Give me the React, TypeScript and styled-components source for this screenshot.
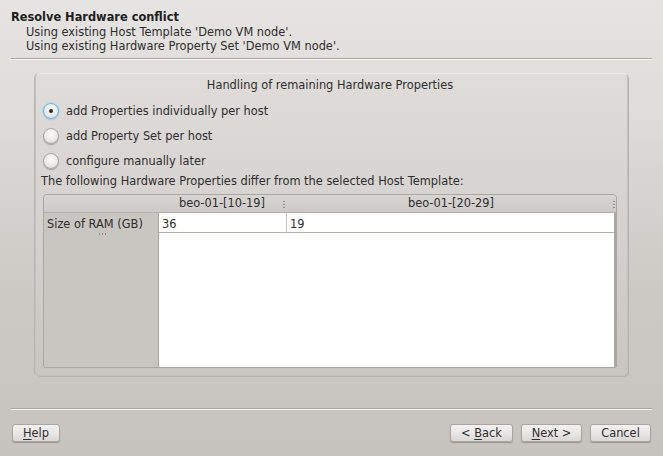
import React from 'react';
import styled, { createGlobalStyle } from 'styled-components';

const GlobalStyle = createGlobalStyle`
  html, body {
    margin: 0;
    padding: 0;
  }
  body {
    font-family: "DejaVu Sans", "Liberation Sans", sans-serif;
    font-size: 11.4px;
    color: #2e2e2e;
  }
`;

const Window = styled.div`
  width: 663px;
  height: 456px;
  box-sizing: border-box;
  display: flex;
  flex-direction: column;
  background: linear-gradient(180deg, #e6e4e2 0px, #dedbd8 120px, #ccc8c4 300px, #c7c3bf 456px);
  overflow: hidden;
`;

const Header = styled.div`
  padding: 10px 11px 0 11px;
`;

const HeaderTitle = styled.div`
  font-weight: bold;
  line-height: 14px;
  height: 15px;
  color: #1e1e1e;
`;

const HeaderLine = styled.div`
  padding-left: 15px;
  line-height: 14px;
`;

const Separator = styled.div<{ $top: number }>`
  margin: ${p => p.$top}px 11px 0 11px;
  height: 1px;
  background: #a9a5a1;
  border-bottom: 1px solid #f6f5f4;
`;

const GroupBox = styled.div`
  margin: 13px 35px 0 35px;
  height: 303px;
  box-sizing: border-box;
  border: 1px solid #c4c0bc;
  border-top-color: #ecebea;
  border-radius: 5px;
  background: linear-gradient(180deg, #dfdcda 0%, #d3cfcc 60%, #c9c5c1 100%);
  box-shadow: 1px 1px 0 #b5b1ad, -1px 0 0 #b9b5b1;
  padding: 4px 10px 0 7px;
  display: flex;
  flex-direction: column;
`;

const GroupTitle = styled.div`
  text-align: center;
  line-height: 14px;
  height: 14px;
  margin-bottom: 6px;
`;

const RadioRow = styled.label`
  display: flex;
  align-items: center;
  gap: 7px;
  height: 25px;
  padding-left: 0;
`;

const RadioCircle = styled.span<{ $checked?: boolean }>`
  width: 16px;
  height: 16px;
  border-radius: 50%;
  box-sizing: border-box;
  border: 1px solid ${p => (p.$checked ? '#6ab7e4' : '#aaa6a2')};
  background: radial-gradient(circle at 50% 35%, #fbfbfa 0%, #ebe9e7 55%, #d8d5d2 100%);
  box-shadow: ${p => (p.$checked ? '0 0 0 1px #a9d9f5, 0 1px 1px rgba(0,0,0,0.25)' : '0 1px 1px rgba(0,0,0,0.25)')};
  display: flex;
  align-items: center;
  justify-content: center;
  &::after {
    content: '';
    width: 4px;
    height: 4px;
    border-radius: 50%;
    background: ${p => (p.$checked ? '#2a2a2a' : 'transparent')};
  }
`;

const InfoText = styled.div`
  line-height: 14px;
  margin: 1px 0 6px -2px;
`;

const Table = styled.div`
  height: 174px;
  box-sizing: border-box;
  border: 1px solid #aaa6a2;
  border-radius: 4px 4px 2px 2px;
  display: grid;
  grid-template-columns: 114px 128px 1fr;
  grid-template-rows: 18px 20px 1fr;
  overflow: hidden;
  background: #c9c5c1;
`;

const HeaderCell = styled.div<{ $handle?: boolean }>`
  position: relative;
  background: linear-gradient(180deg, #d8d5d2, #cdc9c6);
  border-bottom: 1px solid #b3afab;
  line-height: 17px;
  text-align: center;
  color: #2e2e2e;
  &::after {
    content: ${p => (p.$handle ? "''" : 'none')};
    position: absolute;
    right: 1px;
    top: 5px;
    width: 2px;
    height: 8px;
    background: radial-gradient(circle, #8e8a86 0.8px, transparent 1px) 0 0 / 2px 3px repeat-y;
  }
`;

const RowHeader = styled.div`
  position: relative;
  padding: 4px 0 0 3px;
  line-height: 14px;
  &::after {
    content: '';
    position: absolute;
    left: 54px;
    top: 20px;
    width: 8px;
    height: 2px;
    background: radial-gradient(circle, #8e8a86 0.7px, transparent 1px) 0 0 / 3px 2px repeat-x;
  }
`;

const Cell = styled.div<{ $last?: boolean }>`
  background: #ffffff;
  border-left: 1px solid ${p => (p.$last ? '#c4c0bc' : '#a9a5a1')};
  border-bottom: 1px solid #b3afab;
  border-right: ${p => (p.$last ? '2px solid #aaa6a2' : 'none')};
  padding: 4px 0 0 3px;
  line-height: 14px;
`;

const RowHeaderFill = styled.div`
  background: #c9c5c1;
`;

const EmptyArea = styled.div`
  grid-column: 2 / 4;
  background: #ffffff;
  border-left: 1px solid #a9a5a1;
  border-right: 2px solid #aaa6a2;
`;

const Spacer = styled.div`
  flex: 1;
`;

const Footer = styled.div`
  display: flex;
  align-items: center;
  padding: 14px 12px 14px 12px;
  gap: 8px;
`;

const Button = styled.button<{ $width: number }>`
  width: ${p => p.$width}px;
  height: 18px;
  box-sizing: border-box;
  padding: 0;
  font-family: "DejaVu Sans", "Liberation Sans", sans-serif;
  font-size: 11.4px;
  color: #2e2e2e;
  border: 1px solid #aaa5a1;
  border-radius: 3px;
  background: linear-gradient(180deg, #f3f2f1 0%, #e6e4e2 60%, #dad7d4 100%);
  box-shadow: 0 1px 1px rgba(0, 0, 0, 0.25);
  line-height: 16px;
`;

const Mnemonic = styled.span`
  text-decoration: underline;
  text-underline-offset: 2px;
`;

const FooterGap = styled.div`
  flex: 1;
`;

const App = () => {
  return (
    <>
      <GlobalStyle />
      <Window>
        <Header>
          <HeaderTitle>Resolve Hardware conflict</HeaderTitle>
          <HeaderLine>Using existing Host Template 'Demo VM node'.</HeaderLine>
          <HeaderLine>Using existing Hardware Property Set 'Demo VM node'.</HeaderLine>
        </Header>
        <Separator $top={5} />

        <GroupBox>
          <GroupTitle>Handling of remaining Hardware Properties</GroupTitle>
          <RadioRow>
            <RadioCircle $checked />
            add Properties individually per host
          </RadioRow>
          <RadioRow>
            <RadioCircle />
            add Property Set per host
          </RadioRow>
          <RadioRow>
            <RadioCircle />
            configure manually later
          </RadioRow>
          <InfoText>The following Hardware Properties differ from the selected Host Template:</InfoText>
          <Table>
            <HeaderCell />
            <HeaderCell $handle>beo-01-[10-19]</HeaderCell>
            <HeaderCell $handle>beo-01-[20-29]</HeaderCell>
            <RowHeader>Size of RAM (GB)</RowHeader>
            <Cell>36</Cell>
            <Cell $last>19</Cell>
            <RowHeaderFill />
            <EmptyArea />
          </Table>
        </GroupBox>

        <Spacer />
        <Separator $top={0} />
        <Footer>
          <Button $width={48}>
            <Mnemonic>H</Mnemonic>elp
          </Button>
          <FooterGap />
          <Button $width={63}>
            &lt; <Mnemonic>B</Mnemonic>ack
          </Button>
          <Button $width={61}>
            <Mnemonic>N</Mnemonic>ext &gt;
          </Button>
          <Button $width={61}>Cancel</Button>
        </Footer>
      </Window>
    </>
  );
};

export default App;
